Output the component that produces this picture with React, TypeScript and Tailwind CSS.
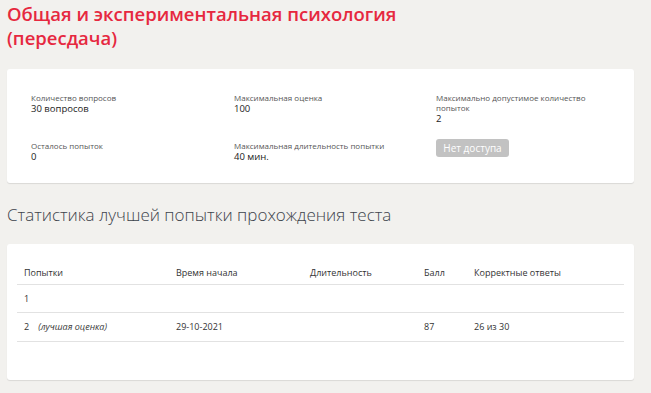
import React from "react";

const Info = ({ label, value }: { label: string; value: string }) => (
  <div className="flex flex-col">
    <div className="text-[8px] leading-[10px] text-[#555]">{label}</div>
    <div className="text-[9.5px] leading-[11px] font-medium text-[#222]">{value}</div>
  </div>
);

export default function App() {
  const cols = "grid grid-cols-[152px_134px_114px_50px_1fr]";
  return (
    <div
      className="w-[651px] h-[393px] bg-[#f2f1ee] px-[7px] pt-[2px] overflow-hidden"
      style={{ fontFamily: '"Open Sans", "Noto Sans", sans-serif' }}
    >
      <h1 className="text-[18.5px] leading-[24px] font-semibold text-[#e6283f] w-[420px]">
        Общая и экспериментальная психология (пересдача)
      </h1>
      <div className="mt-[19px] h-[114px] w-[627px] bg-white rounded-[3px] shadow-[0_1px_1px_rgba(0,0,0,0.1)] pl-[24px] pt-[24px]">
        <div className="grid grid-cols-[203px_202px_1fr] gap-y-[15px]">
          <Info label="Количество вопросов" value="30 вопросов" />
          <Info label="Максимальная оценка" value="100" />
          <div className="flex flex-col w-[150px]">
            <div className="text-[8px] leading-[10px] text-[#555]">Максимально допустимое количество попыток</div>
            <div className="text-[9.5px] leading-[11px] font-medium text-[#222]">2</div>
          </div>
          <div className="pt-[2px]">
            <Info label="Осталось попыток" value="0" />
          </div>
          <div className="pt-[2px]">
            <Info label="Максимальная длительность попытки" value="40 мин." />
          </div>
          <div>
            <div className="w-[73px] h-[18px] rounded-[3px] bg-[#c2c2c2] text-white text-[10px] flex items-center justify-center">
              Нет доступа
            </div>
          </div>
        </div>
      </div>
      <h2 className="mt-[21px] text-[17px] leading-[22px] font-light text-[#3d434b]">
        Статистика лучшей попытки прохождения теста
      </h2>
      <div className="mt-[18px] h-[136px] w-[627px] bg-white rounded-[3px] shadow-[0_1px_1px_rgba(0,0,0,0.1)] px-[10px] pt-[17px]">
        <div className="text-[9px] text-[#333]">
          <div className={`${cols} h-[24px] items-center border-b border-[#e2e2e2]`}>
            <div className="pl-[7px]">Попытки</div>
            <div className="pl-[7px]">Время начала</div>
            <div className="pl-[7px]">Длительность</div>
            <div className="pl-[7px]">Балл</div>
            <div className="pl-[7px]">Корректные ответы</div>
          </div>
          <div className={`${cols} h-[28px] items-center border-b border-[#e2e2e2]`}>
            <div className="pl-[7px]">1</div>
            <div />
            <div />
            <div />
            <div />
          </div>
          <div className={`${cols} h-[29px] items-center border-b border-[#e2e2e2]`}>
            <div className="pl-[7px]">
              2<span className="ml-[9px] italic text-[9px] text-[#3a3a3a]">(лучшая оценка)</span>
            </div>
            <div className="pl-[7px]">29-10-2021</div>
            <div />
            <div className="pl-[7px]">87</div>
            <div className="pl-[7px]">26 из 30</div>
          </div>
        </div>
      </div>
    </div>
  );
}
